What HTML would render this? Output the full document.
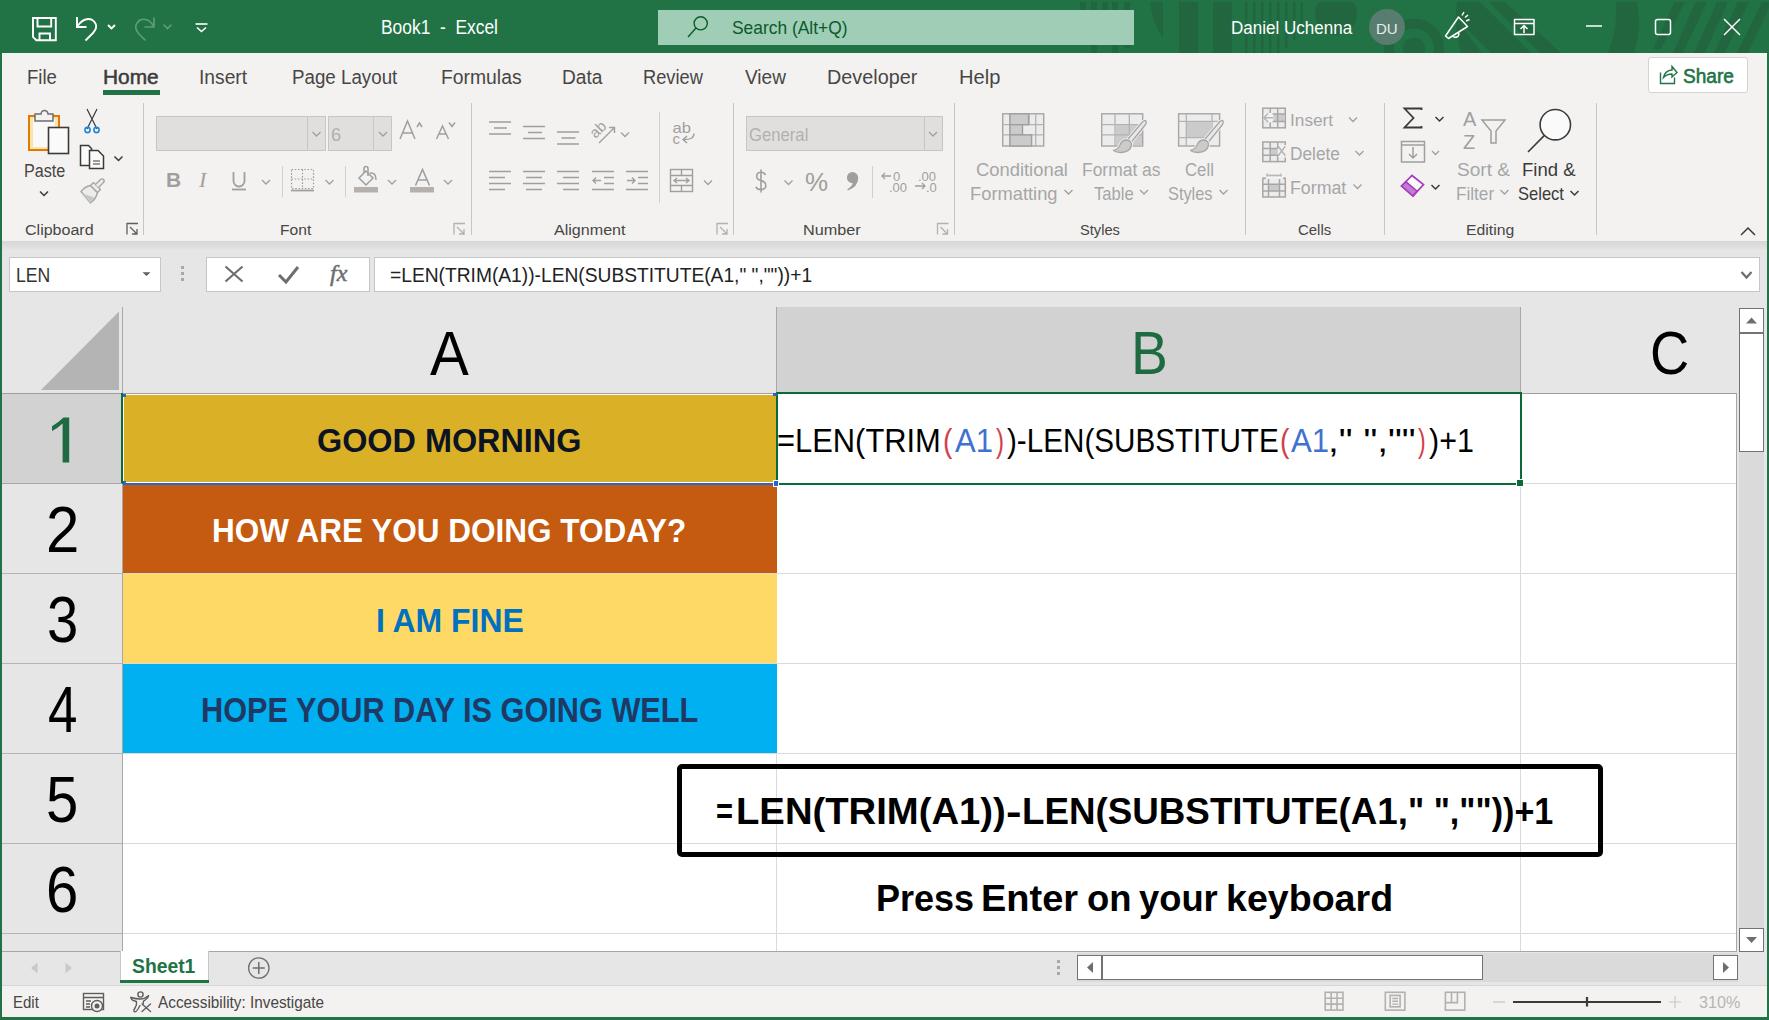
<!DOCTYPE html>
<html><head><meta charset="utf-8">
<style>
*{box-sizing:border-box}
html,body{margin:0;padding:0}
body{width:1769px;height:1020px;overflow:hidden;position:relative;background:#217346;font-family:"Liberation Sans",sans-serif}
.a{position:absolute}
.t{position:absolute;white-space:nowrap;transform-origin:0 0;font-family:"Liberation Sans",sans-serif}
svg{position:absolute;overflow:visible}
</style></head><body>
<!-- title bar -->
<div class="a" style="left:0;top:0;width:1769px;height:53px;background:#217346"></div>
<!-- decorative pattern -->
<svg style="left:0;top:0" width="1769" height="53" viewBox="0 0 1769 53">
  <defs><clipPath id="tbc"><rect x="0" y="2" width="1769" height="51"/></clipPath></defs>
  <g clip-path="url(#tbc)" fill="#22663f">
    <rect x="1080" y="2" width="6" height="8"/><rect x="1091" y="2" width="6" height="51"/><rect x="1102" y="2" width="6" height="8"/><rect x="1112" y="2" width="6" height="51"/><rect x="1124" y="2" width="6" height="46"/>
    <path d="M1150 2 L1163 2 L1163 38 Q1152 22 1150 2Z"/>
    <rect x="1179" y="2" width="19" height="51"/>
    <rect x="1213" y="2" width="19" height="51"/>
    <rect x="1245" y="2" width="2.5" height="51"/><rect x="1253" y="2" width="2.5" height="51"/><rect x="1261" y="2" width="2.5" height="51"/><rect x="1269" y="2" width="2.5" height="51"/><rect x="1277" y="2" width="2.5" height="51"/><rect x="1285" y="2" width="2.5" height="46"/><rect x="1293" y="2" width="2.5" height="38"/><rect x="1300.5" y="2" width="2.5" height="28"/>
    <circle cx="1336" cy="14" r="21"/>
    <path fill-rule="evenodd" d="M1384 48.5 A30 30 0 0 1 1444 48.5 A30 30 0 0 1 1384 48.5 Z M1394 48.5 A20 20 0 0 0 1434 48.5 A20 20 0 0 0 1394 48.5 Z"/>
    <circle cx="1414" cy="48.5" r="11"/>
    <path d="M1457 2 L1505 2 L1561 53 L1461 53 Q1453 28 1457 2 Z"/>
    <path d="M1616 2 L1637 2 Q1642 28 1634 53 L1608 53 Q1618 28 1616 2 Z"/>
    <path d="M1674.5 2 L1685 2 L1661 49 L1653 49 Z"/><path d="M1695.5 2 L1707 2 L1683 53 L1673 53 Z"/><path d="M1717 2 L1728 2 L1705 53 L1694 53 Z"/><path d="M1737.5 2 L1749 2 L1725 53 L1714 53 Z"/><path d="M1762 2 L1769 2 L1769 8 L1748 53 L1737 53 Z"/>
  </g>
  <g clip-path="url(#tbc)" fill="#217346">
    <path d="M1480 2 L1489 2 L1540 53 L1531 53 Z"/><path d="M1458 22 L1466 28 L1491 53 L1482 53 Z"/>
  </g>
</svg>
<!-- QAT icons -->
<svg style="left:0;top:0" width="260" height="53">
  <g fill="none" stroke="#fff" stroke-width="1.9">
    <path d="M33 18 H55.8 V40.2 H36.3 L33 36.8 Z"/><path d="M37.5 18 V26.5 H51.2 V18"/><path d="M39.5 40.2 V33.5 H50 V40.2"/>
  </g>
  <g fill="none" stroke="#fff" stroke-width="1.9" stroke-linecap="butt">
    <path d="M77 17 V27 H86.5"/><path d="M77.5 26 Q84 17 91.5 19.5 Q100 25 93 33 L85.5 40.5"/>
    <path d="M108 25 L111.5 28.5 L115 25"/>
    <path d="M203 19.5 H193" stroke="none"/>
  </g>
  <g fill="none" stroke="#5e9d78" stroke-width="1.6" stroke-linecap="round">
    <path d="M154 18 V27 H145"/><path d="M153.5 26 Q148 17 140 20 Q132 26 139 34 L145 40"/>
    <path d="M164 25 L167.5 28.5 L171 25"/>
  </g>
  <g fill="none" stroke="#fff" stroke-width="1.6">
    <path d="M195.5 24 H207.5"/><path d="M197 27.5 L201.5 31.5 L206 27.5"/>
  </g>
</svg>
<!-- search box -->
<div class="a" style="left:658px;top:10px;width:476px;height:35px;background:#a0cdb5"></div>
<svg style="left:0;top:0" width="760" height="53"><g fill="none" stroke="#0b5a2c" stroke-width="1.4"><circle cx="700.7" cy="23.3" r="6.6"/><path d="M696 28 L688 37"/></g></svg>
<!-- avatar & window controls -->
<div class="a" style="left:1369px;top:9px;width:36px;height:36px;border-radius:50%;background:#587c70"></div>
<div class="t" style="left:1376px;top:18.5px;font-size:15.5px;line-height:20px;color:#e4eee9;transform:scaleX(0.97)">DU</div>
<svg style="left:0;top:0" width="1769" height="53">
  <g fill="none" stroke="#fff" stroke-width="1.5" stroke-linejoin="round">
    <path d="M1445.5 36 L1448.5 38.5 L1467.5 26.5 L1458.5 17 Z"/><path d="M1452.5 35.5 A3.2 3.2 0 1 0 1458.5 32.5"/><path d="M1462 15.5 L1464 12 M1466 21 L1469.5 19.5 M1465 17.5 L1468 15"/>
    <rect x="1514.5" y="19.5" width="19.5" height="15"/><path d="M1514.5 23.5 H1534"/><path d="M1524 33 V25.5 M1520.5 29 L1524 25.5 L1527.5 29"/>
    <path d="M1586 26 H1602"/>
    <rect x="1655.5" y="19.5" width="15" height="15" rx="2"/>
    <path d="M1724 19 L1740 35 M1740 19 L1724 35"/>
  </g>
</svg>

<!-- ribbon -->
<div class="a" style="left:2px;top:53px;width:1765px;height:188px;background:#f3f2f1"></div>
<div class="a" style="left:103px;top:90px;width:57px;height:5px;background:#217346"></div>
<div class="a" style="left:1648px;top:57px;width:100px;height:36px;background:#fff;border:1px solid #d6d4d2;border-radius:3px"></div>
<svg style="left:0;top:0" width="1769" height="100"><g fill="none" stroke="#217346" stroke-width="1.4" stroke-linejoin="miter"><path d="M1660.5 72.5 V83.5 H1674.5 V77.5"/><path d="M1663.5 77.5 Q1665 70.5 1672 70 V66.5 L1677 72.5 L1672 77 V74 Q1667 74 1663.5 77.5 Z"/></g></svg>
<!-- group separators -->
<div class="a" style="left:143px;top:103px;width:1px;height:132px;background:#c8c6c4"></div>
<div class="a" style="left:471px;top:103px;width:1px;height:132px;background:#c8c6c4"></div>
<div class="a" style="left:733px;top:103px;width:1px;height:132px;background:#c8c6c4"></div>
<div class="a" style="left:954px;top:103px;width:1px;height:132px;background:#c8c6c4"></div>
<div class="a" style="left:1245px;top:103px;width:1px;height:132px;background:#c8c6c4"></div>
<div class="a" style="left:1384px;top:103px;width:1px;height:132px;background:#c8c6c4"></div>
<div class="a" style="left:1596px;top:103px;width:1px;height:132px;background:#c8c6c4"></div>
<div class="a" style="left:282px;top:166px;width:1px;height:31px;background:#d2d0ce"></div>
<div class="a" style="left:345px;top:166px;width:1px;height:31px;background:#d2d0ce"></div>
<div class="a" style="left:659px;top:112px;width:1px;height:91px;background:#d2d0ce"></div>
<div class="a" style="left:872px;top:166px;width:1px;height:32px;background:#d2d0ce"></div>
<!-- font boxes -->
<div class="a" style="left:156px;top:116px;width:170px;height:35px;background:#e1dfdd;border:1px solid #c8c6c4"></div>
<div class="a" style="left:307px;top:117px;width:1px;height:33px;background:#c8c6c4"></div>
<div class="a" style="left:328px;top:116px;width:64px;height:35px;background:#e1dfdd;border:1px solid #c8c6c4"></div>
<div class="a" style="left:373px;top:117px;width:1px;height:33px;background:#c8c6c4"></div>
<div class="a" style="left:746px;top:116px;width:197px;height:35px;background:#e1dfdd;border:1px solid #c8c6c4"></div>
<div class="a" style="left:924px;top:117px;width:1px;height:33px;background:#c8c6c4"></div>
<!-- RIBBON ICONS -->
<svg style="left:0;top:0" width="1769" height="245" id="ribicons">
  <!-- paste -->
  <rect x="29" y="116" width="30" height="34" fill="#fbe3b0" stroke="#e07b00" stroke-width="2"/>
  <rect x="33" y="119" width="22" height="28" fill="#f9f9f9"/>
  <path d="M35 121 V114 H41 A3.5 3.5 0 0 1 48 114 H53 V121 Z" fill="#f3f2f1" stroke="#6e6e6e" stroke-width="1.5"/>
  <rect x="48.5" y="127.5" width="20" height="26" fill="#fafafa" stroke="#3b3a39" stroke-width="1.6"/>
  <!-- chevrons (dark) -->
  <g fill="none" stroke="#3b3a39" stroke-width="1.5">
    <path d="M40 191.5 L44 195.5 L48 191.5"/>
    <path d="M114.5 156.5 L118.5 160.5 L122.5 156.5"/>
    <path d="M1435.5 117 L1439.5 121 L1443.5 117"/>
    <path d="M1431.5 185 L1435.5 189 L1439.5 185"/>
    <path d="M1570.5 191 L1574.5 195 L1578.5 191"/>
    <path d="M1741 235 L1748 228 L1755 235"/>
  </g>
  <!-- scissors -->
  <g fill="none" stroke="#3b3a39" stroke-width="1.2"><path d="M87 109 L97 129 M97 109 L87 129"/></g>
  <g fill="none" stroke="#1e8ad6" stroke-width="1.6"><circle cx="87.5" cy="130" r="2.6"/><circle cx="96.5" cy="130" r="2.6"/></g>
  <!-- copy -->
  <g fill="#fafafa" stroke="#3b3a39" stroke-width="1.5"><path d="M89.5 165.5 H80.5 V145.5 H88.5 L91.5 148.5 V150.5"/><path d="M89.5 168.5 V150.5 H98 L103.5 156 V168.5 Z"/></g>
  <g stroke="#3b3a39" stroke-width="1.2"><path d="M93 161 H100 M93 164 H100"/></g>
  <!-- format painter -->
  <g stroke="#a6a6a6" stroke-width="1.4" stroke-linejoin="round">
    <path d="M81 191.5 Q85 186.5 90.5 185.5 L97.5 192.5 Q96 199 90.5 203 Z" fill="#ececec"/>
    <path d="M82.5 193.5 L90.5 203 L94.5 197.5 Z" fill="#c8c8c8" stroke="none"/>
    <path d="M90.5 185.5 L93.5 182.5 L100.5 189.5 L97.5 192.5 Z" fill="#ececec"/>
    <path d="M95.5 184.5 L100.5 179.5 A2 2 0 0 1 103.5 182.5 L98.5 187.5" fill="#ececec"/>
  </g>
  <!-- launchers -->
  <g fill="none" stroke="#605e5c" stroke-width="1.3">
    <path d="M126.5 235 V224 H137.5 V235 Z" stroke="none"/>
    <path d="M127 234.5 V223.5 H138" /><path d="M130 227 L137 234 M137 229 V234 H132"/>
  </g>
  <g fill="none" stroke="#b3b0ad" stroke-width="1.3">
    <path d="M454 234.5 V223.5 H465"/><path d="M457 227 L464 234 M464 229 V234 H459"/>
    <path d="M717 234.5 V223.5 H728"/><path d="M720 227 L727 234 M727 229 V234 H722"/>
    <path d="M937.5 234.5 V223.5 H948.5"/><path d="M940.5 227 L947.5 234 M947.5 229 V234 H942.5"/>
  </g>
  <!-- disabled chevrons -->
  <g fill="none" stroke="#a19f9d" stroke-width="1.3">
    <path d="M312.5 132 L316.5 136 L320.5 132"/>
    <path d="M379 132 L383 136 L387 132"/>
    <path d="M934 132 L938 136 L942 132" transform="translate(-5 0)"/>
    <path d="M262 180 L266 184 L270 180"/>
    <path d="M325.5 180 L329.5 184 L333.5 180"/>
    <path d="M388 180 L392 184 L396 180"/>
    <path d="M444 180 L448 184 L452 180"/>
    <path d="M621 132.5 L625 136.5 L629 132.5"/>
    <path d="M704 180.5 L708 184.5 L712 180.5"/>
    <path d="M784.5 180.5 L788.5 184.5 L792.5 180.5"/>
    <path d="M1064.5 190 L1068.5 194 L1072.5 190"/>
    <path d="M1140 190 L1144 194 L1148 190"/>
    <path d="M1219.5 190 L1223.5 194 L1227.5 190"/>
    <path d="M1349 117.5 L1353 121.5 L1357 117.5"/>
    <path d="M1355.5 151 L1359.5 155 L1363.5 151"/>
    <path d="M1353.5 184.5 L1357.5 188.5 L1361.5 184.5"/>
    <path d="M1432 151 L1435.5 154.5 L1439 151"/>
    <path d="M1500.5 190 L1504.5 194 L1508.5 190"/>
  </g>
  <!-- grow/shrink font -->
  <g fill="none" stroke="#a19f9d" stroke-width="1.5">
    <path d="M400 139 L407.5 121 L415 139 M403 133 H412"/><path d="M417 127 L419.5 123 L422 127"/>
    <path d="M436.5 139 L442.5 126 L448.5 139 M439 134 H446"/><path d="M449 122.5 L452 126.5 L455 122.5"/>
  </g>
  <!-- B I U -->
  <text x="166" y="187" font-family="Liberation Sans" font-weight="700" font-size="21" fill="#a19f9d">B</text>
  <text x="199" y="187" font-family="Liberation Serif" font-style="italic" font-size="22" fill="#a19f9d">I</text>
  <g fill="none" stroke="#a19f9d" stroke-width="1.8"><path d="M233.5 172 V181 A5.5 5.5 0 0 0 244.5 181 V172"/><path d="M232 189.5 H246"/></g>
  <!-- borders -->
  <g fill="none" stroke="#a19f9d" stroke-width="1.2" stroke-dasharray="1.6 1.6"><rect x="291.5" y="169.5" width="22" height="19"/><path d="M302.5 169.5 V189 M291.5 179 H313.5"/></g>
  <path d="M291 190.5 H314" stroke="#a19f9d" stroke-width="1.8"/>
  <!-- fill color -->
  <g fill="none" stroke="#a19f9d" stroke-width="1.5"><path d="M359 178 L366 171 L373 178 L366 185 Z"/><path d="M364 173 V168.5 A2 2 0 0 1 368 168.5 V176"/><path d="M370 173 Q376 172 376 180"/></g>
  <rect x="354" y="187" width="24" height="5.5" fill="#b5b0ac"/>
  <!-- font color -->
  <g fill="none" stroke="#a19f9d" stroke-width="1.6"><path d="M415.5 185.5 L422.5 169.5 L429.5 185.5 M418 180 H427"/></g>
  <rect x="410" y="187" width="24" height="5.5" fill="#b5b0ac"/>
  <!-- alignment lines -->
  <g stroke="#a19f9d" stroke-width="1.6">
    <path d="M489 122 H511 M494 128 H507 M489 134 H511"/>
    <path d="M523 126.5 H545 M528 132.5 H542 M523 138.5 H545"/>
    <path d="M557 132 H579 M561.5 138 H575.5 M557 144 H579"/>
    <path d="M489 171.5 H511 M489 177.5 H505 M489 183.5 H511 M489 189.5 H505"/>
    <path d="M523 171.5 H545 M526 177.5 H542 M523 183.5 H545 M526 189.5 H542"/>
    <path d="M557 171.5 H579 M563 177.5 H579 M557 183.5 H579 M563 189.5 H579"/>
    <path d="M592 171.5 H614 M604 177.5 H614 M604 183.5 H614 M592 189.5 H614"/>
    <path d="M626 171.5 H648 M638 177.5 H648 M638 183.5 H648 M626 189.5 H648"/>
  </g>
  <g fill="none" stroke="#a19f9d" stroke-width="1.4">
    <path d="M601 180.5 H593 M596 177.5 L593 180.5 L596 183.5"/>
    <path d="M627 180.5 H635 M632 177.5 L635 180.5 L632 183.5"/>
    <path d="M599 143 L614.5 127.5 M609 127.5 H614.5 V133"/>
    <rect x="670.5" y="169.5" width="22" height="22"/><path d="M670.5 175.5 H692.5 M670.5 185.5 H692.5 M681.5 169.5 V175.5 M681.5 185.5 V191.5"/>
    <path d="M674 180.5 H689 M677 178 L674 180.5 L677 183 M686 178 L689 180.5 L686 183"/>
    <path d="M683 139.5 Q694 140 694 133.5 M687 136 L683 139.5 L687 143"/>
  </g>
  <text x="0" y="0" font-family="Liberation Sans" font-size="15" fill="#a19f9d" transform="translate(595.5 139) rotate(-45)">ab</text>
  <text x="672.5" y="133" font-family="Liberation Sans" font-size="15" fill="#a19f9d" textLength="18.5" lengthAdjust="spacingAndGlyphs">ab</text>
  <text x="672.5" y="144" font-family="Liberation Sans" font-size="15" fill="#a19f9d">c</text>
  <!-- number -->
  <path d="M761 169.5 V192.5 M765.5 175 Q764.5 172.3 761 172.3 Q756.7 172.3 756.7 176.3 Q756.7 179.6 761 180.6 Q765.8 181.7 765.8 185.6 Q765.8 189.6 761 189.6 Q757.3 189.6 755.8 186.8" fill="none" stroke="#a19f9d" stroke-width="1.6"/>
  <text x="805" y="191" font-family="Liberation Sans" font-size="26" fill="#a19f9d">%</text>
  <path d="M852.3 172 A5.8 5.8 0 0 1 858.2 178.5 Q858 186.5 848 190.6 L847.3 189.2 Q852 186.5 852.8 183.3 A5.6 5.6 0 0 1 852.3 172 Z" fill="#a19f9d"/>
  <text x="893" y="181" font-family="Liberation Sans" font-size="13" fill="#a19f9d">0</text>
  <text x="889" y="192" font-family="Liberation Sans" font-size="13" fill="#a19f9d">.00</text>
  <path d="M891 176 H882 M885 173 L882 176 L885 179" fill="none" stroke="#a19f9d" stroke-width="1.3"/>
  <text x="918" y="181" font-family="Liberation Sans" font-size="13" fill="#a19f9d">.00</text>
  <text x="926" y="192" font-family="Liberation Sans" font-size="13" fill="#a19f9d">.0</text>
  <path d="M915 186 H925 M922 183 L925 186 L922 189" fill="none" stroke="#a19f9d" stroke-width="1.3"/>
  <!-- styles icons -->
  <g fill="#ececec" stroke="#a6a6a6" stroke-width="1.4">
    <rect x="1002.7" y="113.8" width="41" height="32.2"/>
    <rect x="1101.7" y="113.8" width="41" height="32.2"/>
    <rect x="1178.6" y="113.8" width="41" height="32.2"/>
  </g>
  <g fill="none" stroke="#b3b3b3" stroke-width="1.3">
    <path d="M1010 113.8 V146 M1035.7 113.8 V146 M1002.7 124.7 H1043.7 M1002.7 134.9 H1043.7 M1029 113.8 V124.7"/>
    <path d="M1115 113.8 V146 M1129.3 113.8 V146 M1101.7 124.7 H1142.7 M1101.7 134.9 H1142.7"/>
    <path d="M1186.3 113.8 V146 M1212 113.8 V137.6 M1178.6 121.3 H1219.6 M1178.6 137.6 H1212"/>
  </g>
  <g fill="#cbcbcb" stroke="#9e9e9e" stroke-width="1.4">
    <rect x="1010" y="113.8" width="18.6" height="10.9"/>
    <rect x="1010" y="124.7" width="12.5" height="10.2"/>
    <rect x="1010" y="134.9" width="21.6" height="11.1"/>
  </g>
  <rect x="1115.7" y="125.4" width="26.3" height="20" fill="#cbcbcb"/>
  <path d="M1115 124.7 H1142.7 M1115 134.9 H1142.7 M1129.3 124.7 V146" stroke="#b3b3b3" stroke-width="1.3"/>
  <rect x="1187" y="122" width="25" height="15" fill="#cbcbcb"/>
  <g stroke="#a6a6a6" stroke-width="1.3" stroke-linejoin="round">
    <path d="M1128 139 L1142 122.5 Q1145 119.5 1146 121 Q1147 123 1144 126.5 L1131.5 142 Z" fill="#e8e8e8" stroke="#f3f2f1" stroke-width="3"/>
    <path d="M1128 139 L1142 122.5 Q1145 119.5 1146 121 Q1147 123 1144 126.5 L1131.5 142 Z" fill="#e8e8e8"/>
    <path d="M1126.5 140 Q1132 140.5 1131.5 145.5 Q1130 152 1121 152.5 Q1116 152.5 1113.5 150.5 Q1118 149.5 1120 145 Q1122 140 1126.5 140 Z" fill="#cbcbcb" stroke="#f3f2f1" stroke-width="3"/>
    <path d="M1126.5 140 Q1132 140.5 1131.5 145.5 Q1130 152 1121 152.5 Q1116 152.5 1113.5 150.5 Q1118 149.5 1120 145 Q1122 140 1126.5 140 Z" fill="#cbcbcb"/>
  </g>
  <g stroke="#a6a6a6" stroke-width="1.3" stroke-linejoin="round" transform="translate(77 0)">
    <path d="M1128 139 L1142 122.5 Q1145 119.5 1146 121 Q1147 123 1144 126.5 L1131.5 142 Z" fill="#e8e8e8" stroke="#f3f2f1" stroke-width="3"/>
    <path d="M1128 139 L1142 122.5 Q1145 119.5 1146 121 Q1147 123 1144 126.5 L1131.5 142 Z" fill="#e8e8e8"/>
    <path d="M1126.5 140 Q1132 140.5 1131.5 145.5 Q1130 152 1121 152.5 Q1116 152.5 1113.5 150.5 Q1118 149.5 1120 145 Q1122 140 1126.5 140 Z" fill="#cbcbcb" stroke="#f3f2f1" stroke-width="3"/>
    <path d="M1126.5 140 Q1132 140.5 1131.5 145.5 Q1130 152 1121 152.5 Q1116 152.5 1113.5 150.5 Q1118 149.5 1120 145 Q1122 140 1126.5 140 Z" fill="#cbcbcb"/>
  </g>
  <!-- cells icons -->
  <g fill="#ececec" stroke="#a6a6a6" stroke-width="1.5">
    <rect x="1262.8" y="108.2" width="22.5" height="19.6"/>
    <rect x="1262.8" y="142" width="22.5" height="19.6"/>
    <rect x="1262.8" y="178.2" width="22.5" height="18.8"/>
  </g>
  <rect x="1273.5" y="114" width="11.5" height="7.6" fill="#cbcbcb"/>
  <rect x="1270.2" y="148.5" width="7.5" height="6.8" fill="#cbcbcb"/>
  <rect x="1268.5" y="184.2" width="11" height="6.8" fill="#cbcbcb"/>
  <g fill="none" stroke="#a6a6a6" stroke-width="1.5">
    <path d="M1270.2 108.2 V127.8 M1277.7 108.2 V127.8 M1262.8 114 H1285.3 M1262.8 121.6 H1285.3"/>
    <path d="M1270.2 142 V161.6 M1277.7 142 V148.5 M1277.7 155.3 V161.6 M1262.8 148.5 H1277.7 M1262.8 155.3 H1277.7"/>
    <path d="M1268.5 178.2 V197 M1279.5 178.2 V197 M1262.8 184.2 H1285.3 M1262.8 191 H1285.3"/>
  </g>
  <rect x="1263.6" y="113" width="9" height="9.5" fill="#f3f2f1"/>
  <path d="M1273 117.7 H1264 M1268 113.5 L1263.8 117.7 L1268 121.9" fill="none" stroke="#b8b8b8" stroke-width="1.6"/>
  <rect x="1278.5" y="145" width="8" height="12.5" fill="#f3f2f1"/>
  <path d="M1278.2 146.3 L1285.3 155.8 M1285.3 146.3 L1278.2 155.8" fill="none" stroke="#b3b3b3" stroke-width="1.5"/>
  <path d="M1267 175.5 H1281 M1267 173.5 V178.5 M1281 173.5 V178.5" fill="none" stroke="#b8b8b8" stroke-width="1.4"/>
  <rect x="1266" y="176.5" width="17" height="2.5" fill="#f3f2f1"/>
  <path d="M1267 175.5 H1281" stroke="#b8b8b8" stroke-width="1.4"/>
  <!-- editing icons -->
  <path d="M1421.5 110 V108.5 H1404.5 L1413.5 118 L1404.5 127.5 H1421.5 V126" fill="none" stroke="#3b3a39" stroke-width="1.8"/>
  <g fill="none" stroke="#a19f9d" stroke-width="1.5"><rect x="1401.5" y="141.5" width="23" height="20.5"/><path d="M1401.5 145 H1424.5"/><path d="M1413 147 V158 M1409 154 L1413 158 L1417 154"/></g>
  <path d="M1401.5 186 L1412 175.5 L1423.5 184.5 L1413 196 Z" fill="#fbfbfb" stroke="#a33dbb" stroke-width="1.7"/>
  <path d="M1401.5 186 L1406 181.8 L1417 191 L1413 196 Z" fill="#c27ad6" stroke="#a33dbb" stroke-width="1.5"/>
  <text x="1463" y="126" font-family="Liberation Sans" font-size="20" fill="#a19f9d">A</text>
  <text x="1463" y="149" font-family="Liberation Sans" font-size="20" fill="#a19f9d">Z</text>
  <path d="M1482 120 H1505 L1496 131 V143 H1491 V131 Z" fill="none" stroke="#a19f9d" stroke-width="1.5"/>
  <g fill="none" stroke="#3b3a39" stroke-width="1.6"><circle cx="1555.3" cy="124.7" r="15.2" fill="#fafafa"/><path d="M1544.2 135.6 L1528 152"/></g>
</svg>
<!-- ribbon shadow -->
<div class="a" style="left:2px;top:241px;width:1765px;height:10px;background:linear-gradient(#d6d6d6,#e6e6e6)"></div>
<!-- formula bar area -->
<div class="a" style="left:2px;top:250px;width:1765px;height:57px;background:#e6e6e6"></div>
<div class="a" style="left:9px;top:257px;width:152px;height:35px;background:#fff;border:1px solid #c6c6c6"></div>
<svg style="left:0;top:240px" width="1769" height="70">
  <path d="M142.5 32.3 H150.5 L146.5 36 Z" fill="#605e5c"/>
  <g fill="#a8a8a8"><rect x="181" y="26" width="3" height="3"/><rect x="181" y="32" width="3" height="3"/><rect x="181" y="38" width="3" height="3"/></g>
</svg>
<div class="a" style="left:206px;top:257px;width:164px;height:35px;background:#fff;border:1px solid #c6c6c6"></div>
<div class="a" style="left:374px;top:257px;width:1386px;height:35px;background:#fff;border:1px solid #c6c6c6"></div>
<svg style="left:0;top:240px" width="1769" height="70">
  <g fill="none" stroke="#6e6e6e" stroke-width="2.2"><path d="M225.5 26.5 L242.5 41.5 M242.5 26.5 L225.5 41.5"/></g>
  <path d="M279 35 L286 42 L298 27" fill="none" stroke="#6e6e6e" stroke-width="3"/>
  <text x="330" y="41" font-family="Liberation Serif" font-style="italic" font-size="24" fill="#6e6e6e" stroke="#6e6e6e" stroke-width="0.5">fx</text>
  <path d="M1741.5 32 L1746.5 37.5 L1751.5 32" fill="none" stroke="#6e6e6e" stroke-width="2.2"/>
</svg>

<!-- GRID -->
<div class="a" style="left:2px;top:307px;width:1735px;height:644px;background:#fff"></div>
<!-- column header -->
<div class="a" style="left:2px;top:307px;width:1735px;height:86px;background:#e6e6e6"></div>
<div class="a" style="left:776px;top:307px;width:744px;height:86px;background:#d2d2d2"></div>
<svg style="left:0;top:0" width="1769" height="1020">
  <path d="M41 390 L119 311.5 V390 Z" fill="#b4b4b4"/>
</svg>
<div class="a" style="left:2px;top:393px;width:1735px;height:1px;background:#9e9e9e"></div>
<div class="a" style="left:122px;top:307px;width:1px;height:86px;background:#a8a8a8"></div>
<div class="a" style="left:776px;top:307px;width:1px;height:86px;background:#a8a8a8"></div>
<div class="a" style="left:1520px;top:307px;width:1px;height:86px;background:#a8a8a8"></div>
<div class="a" style="left:776px;top:392px;width:746px;height:2px;background:#0b6b37"></div>
<!-- row header -->
<div class="a" style="left:2px;top:394px;width:120px;height:557px;background:#e6e6e6"></div>
<div class="a" style="left:2px;top:394px;width:120px;height:89px;background:#d2d2d2"></div>
<div class="a" style="left:122px;top:394px;width:1px;height:557px;background:#a8a8a8"></div>
<div class="a" style="left:121px;top:393px;width:2px;height:91px;background:#0b6b37"></div>
<div class="a" style="left:2px;top:483px;width:120px;height:1px;background:#a8a8a8"></div>
<div class="a" style="left:2px;top:573px;width:120px;height:1px;background:#b4b4b4"></div>
<div class="a" style="left:2px;top:663px;width:120px;height:1px;background:#b4b4b4"></div>
<div class="a" style="left:2px;top:753px;width:120px;height:1px;background:#b4b4b4"></div>
<div class="a" style="left:2px;top:843px;width:120px;height:1px;background:#b4b4b4"></div>
<div class="a" style="left:2px;top:933px;width:120px;height:1px;background:#b4b4b4"></div>
<!-- gridlines -->
<div class="a" style="left:123px;top:573px;width:1614px;height:1px;background:#dadada"></div>
<div class="a" style="left:123px;top:663px;width:1614px;height:1px;background:#dadada"></div>
<div class="a" style="left:123px;top:753px;width:1614px;height:1px;background:#dadada"></div>
<div class="a" style="left:123px;top:843px;width:1614px;height:1px;background:#dadada"></div>
<div class="a" style="left:123px;top:933px;width:1614px;height:1px;background:#dadada"></div>
<div class="a" style="left:1521px;top:483px;width:216px;height:1px;background:#dadada"></div>
<div class="a" style="left:776px;top:485px;width:1px;height:466px;background:#dadada"></div>
<div class="a" style="left:1520px;top:485px;width:1px;height:466px;background:#dadada"></div>
<div class="a" style="left:1736px;top:393px;width:1px;height:558px;background:#a8a8a8"></div>
<!-- cell fills -->
<div class="a" style="left:123px;top:394px;width:653px;height:91px;background:#fff"></div>
<div class="a" style="left:124px;top:395px;width:652px;height:87px;background:#dab026"></div>
<div class="a" style="left:123px;top:483px;width:653px;height:2px;background:#2a66c9"></div>
<div class="a" style="left:123px;top:394px;width:3px;height:3px;background:#2a66c9"></div>
<div class="a" style="left:123px;top:481px;width:3px;height:5px;background:#2a66c9"></div>
<div class="a" style="left:123px;top:485px;width:654px;height:88px;background:#c55a11"></div>
<div class="a" style="left:123px;top:574px;width:654px;height:89px;background:#ffd966"></div>
<div class="a" style="left:123px;top:664px;width:654px;height:89px;background:#00b0f0"></div>
<!-- B1 selection -->
<div class="a" style="left:776px;top:392px;width:746px;height:93px;border:2px solid #0b6b37;background:transparent"></div>
<div class="a" style="left:776px;top:392px;width:2px;height:93px;background:#0b6b37"></div>
<div class="a" style="left:1517px;top:480px;width:6px;height:6px;background:#0b6b37;outline:1px solid #fff"></div>
<div class="a" style="left:773px;top:393px;width:4px;height:3px;background:#2a66c9"></div>
<div class="a" style="left:773px;top:480px;width:6px;height:7px;background:#fff"></div>
<div class="a" style="left:774px;top:481px;width:4px;height:5px;background:#2a66c9"></div>
<!-- annotation box -->
<div class="a" style="left:677px;top:764px;width:926px;height:93px;border:5px solid #000;border-radius:5px"></div>
<!-- vertical scrollbar -->
<div class="a" style="left:1737px;top:307px;width:30px;height:644px;background:#e6e6e6"></div>
<div class="a" style="left:1739px;top:452px;width:25px;height:476px;background:#dadada"></div>
<div class="a" style="left:1739px;top:308px;width:25px;height:25px;background:#fff;border:1px solid #737373"></div>
<div class="a" style="left:1739px;top:333px;width:25px;height:119px;background:#fff;border:1px solid #737373;border-top-width:1px"></div>
<svg style="left:0;top:0" width="1769" height="1020"><path d="M1746 323.5 H1757 L1751.5 317.5 Z" fill="#6e6e6e"/><path d="M1746 937 H1757 L1751.5 943 Z" fill="#6e6e6e"/></svg>
<!-- sheet tab bar -->
<div class="a" style="left:2px;top:951px;width:1765px;height:34px;background:#e6e6e6"></div>
<div class="a" style="left:2px;top:951px;width:1735px;height:1px;background:#a6a6a6"></div>
<div class="a" style="left:1077px;top:953px;width:661px;height:29px;background:#dadada"></div>
<div class="a" style="left:120px;top:951px;width:89px;height:32px;background:#fff;border-left:1px solid #c6c6c6;border-right:1px solid #c6c6c6"></div>
<div class="a" style="left:120px;top:980px;width:89px;height:2.5px;background:#217346"></div>
<svg style="left:0;top:0" width="1769" height="1020">
  <path d="M37.5 962.5 V973.5 L31 968 Z" fill="#c8c8c8"/><path d="M65.5 962.5 V973.5 L72 968 Z" fill="#c8c8c8"/>
  <circle cx="258.8" cy="968" r="10.2" fill="none" stroke="#6e6e6e" stroke-width="1.3"/><path d="M258.8 962 V974 M252.8 968 H264.8" stroke="#6e6e6e" stroke-width="1.5"/>
  <g fill="#a8a8a8"><rect x="1057" y="960" width="3" height="3"/><rect x="1057" y="966" width="3" height="3"/><rect x="1057" y="972" width="3" height="3"/></g>
</svg>
<!-- h scrollbar -->
<div class="a" style="left:1739px;top:928px;width:25px;height:24px;background:#fff;border:1px solid #737373"></div>
<svg style="left:0;top:0" width="1769" height="1020"><path d="M1746 937 H1757 L1751.5 943 Z" fill="#6e6e6e"/></svg>
<div class="a" style="left:1077px;top:955px;width:26px;height:25px;background:#fff;border:1px solid #737373"></div>
<div class="a" style="left:1101px;top:955px;width:382px;height:25px;background:#fff;border:1px solid #737373;border-left-width:2px"></div>
<div class="a" style="left:1713px;top:955px;width:25px;height:25px;background:#fff;border:1px solid #737373"></div>
<svg style="left:0;top:0" width="1769" height="1020"><path d="M1093 962 V973 L1087 967.5 Z" fill="#6e6e6e"/><path d="M1723 962 V973 L1729 967.5 Z" fill="#6e6e6e"/></svg>
<!-- status bar -->
<div class="a" style="left:2px;top:985px;width:1765px;height:32px;background:#f3f2f1;border-top:1px solid #d6d6d6"></div>
<svg style="left:0;top:0" width="1769" height="1020">
  <g fill="none" stroke="#605e5c" stroke-width="1.4">
    <rect x="83.5" y="993.5" width="20" height="16"/><path d="M83.5 997.5 H103.5 M86 1001 H91 M86 1004 H90 M86 1007 H90"/>
    <circle cx="97" cy="1006" r="5.5" fill="#f3f2f1"/>
  </g>
  <circle cx="97" cy="1006" r="2.5" fill="#605e5c"/>
  <g fill="none" stroke="#605e5c" stroke-width="1.4" stroke-linecap="round">
    <circle cx="140.5" cy="994.5" r="2.6"/><path d="M130.8 997.5 Q131 999.5 133.5 1000.5 L136.5 1001.5 Q137 1005 135 1008 Q133 1011 134.5 1011.8 Q136 1012.3 138 1009 L140 1005.5"/><path d="M148.5 995.8 Q148 998 145.5 999.8 L143.5 1001.2 Q143 1002.5 143.2 1004"/><path d="M131 997.5 Q136 999 140.5 999 Q145 999 148.5 995.8"/><path d="M142 1004 L150.5 1011.5 M150.5 1004 L142 1011.5"/>
  </g>
  <g fill="none" stroke="#a19f9d" stroke-width="1.3">
    <rect x="1325.2" y="992.3" width="17.8" height="17.8" stroke="#b3b0ad" stroke-width="1.6"/><path d="M1331.2 992.3 V1010 M1337.1 992.3 V1010 M1325.2 998.2 H1343 M1325.2 1004.1 H1343" stroke="#b3b0ad" stroke-width="1.6"/>
    <rect x="1385.3" y="992.3" width="19.6" height="17.8" stroke="#b3b0ad" stroke-width="1.6"/><rect x="1390.1" y="995.4" width="10" height="11.4" stroke="#b3b0ad" stroke-width="1.6"/><path d="M1392.3 998.5 H1398 M1392.3 1001.3 H1398 M1392.3 1004.1 H1398" stroke="#b3b0ad" stroke-width="1.4"/>
    <rect x="1445.4" y="992.3" width="19.4" height="17.8" stroke="#b3b0ad" stroke-width="1.6"/><path d="M1451.5 992.3 V1002.6 M1457.4 992.3 V1002.6 H1445.4" stroke="#b3b0ad" stroke-width="1.6"/>
    <path d="M1493 1002 H1505" stroke="#c8c6c4"/><path d="M1669 1002 H1681 M1675 996 V1008" stroke="#c8c6c4" stroke-width="1.1"/>
  </g>
  <path d="M1513 1002 H1661" stroke="#3b3a39" stroke-width="2.2"/>
  <path d="M1587 997 V1006.5" stroke="#3b3a39" stroke-width="2.2"/>
</svg>
<svg style="left:0;top:0" width="200" height="500"><path d="M62.6 462.5 V423.5 Q58 428 52 431 V426.2 Q59 422 63.5 417.5 H69.2 V462.5 Z" fill="#1e6b41"/></svg>
<div class="t" style="left:380.71px;top:18.00px;font-size:19.57px;line-height:19.57px;font-weight:400;color:#ffffff;transform:scaleX(0.8891);">Book1&nbsp;&nbsp;-&nbsp;&nbsp;Excel</div>
<div class="t" style="left:732.06px;top:19.00px;font-size:18.55px;line-height:18.55px;font-weight:400;color:#0b5a2c;transform:scaleX(0.9388);">Search (Alt+Q)</div>
<div class="t" style="left:1230.86px;top:19.00px;font-size:18.12px;line-height:18.12px;font-weight:400;color:#ffffff;transform:scaleX(0.9398);">Daniel Uchenna</div>
<div class="t" style="left:27.10px;top:67.00px;font-size:20.58px;line-height:20.58px;font-weight:400;color:#484644;transform:scaleX(0.9000);">File</div>
<div class="t" style="left:198.93px;top:67.00px;font-size:20.58px;line-height:20.58px;font-weight:400;color:#484644;transform:scaleX(0.9340);">Insert</div>
<div class="t" style="left:291.59px;top:67.00px;font-size:20.58px;line-height:20.58px;font-weight:400;color:#484644;transform:scaleX(0.9113);">Page Layout</div>
<div class="t" style="left:440.96px;top:67.00px;font-size:20.58px;line-height:20.58px;font-weight:400;color:#484644;transform:scaleX(0.9393);">Formulas</div>
<div class="t" style="left:561.77px;top:67.00px;font-size:20.58px;line-height:20.58px;font-weight:400;color:#484644;transform:scaleX(0.9302);">Data</div>
<div class="t" style="left:642.51px;top:67.00px;font-size:20.58px;line-height:20.58px;font-weight:400;color:#484644;transform:scaleX(0.8866);">Review</div>
<div class="t" style="left:745.20px;top:67.00px;font-size:20.58px;line-height:20.58px;font-weight:400;color:#484644;transform:scaleX(0.9250);">View</div>
<div class="t" style="left:827.34px;top:67.00px;font-size:20.58px;line-height:20.58px;font-weight:400;color:#484644;transform:scaleX(0.9624);">Developer</div>
<div class="t" style="left:959.22px;top:67.00px;font-size:20.58px;line-height:20.58px;font-weight:400;color:#484644;transform:scaleX(0.9780);">Help</div>
<div class="t" style="left:102.69px;top:67.00px;font-size:20.58px;line-height:20.58px;font-weight:400;color:#3b3a39;transform:scaleX(1.0148);-webkit-text-stroke:0.5px #3b3a39">Home</div>
<div class="t" style="left:1683.07px;top:66.00px;font-size:20.58px;line-height:20.58px;font-weight:400;color:#217346;transform:scaleX(0.9259);-webkit-text-stroke:0.6px #217346">Share</div>
<div class="t" style="left:25.47px;top:222.00px;font-size:15.51px;line-height:15.51px;font-weight:400;color:#484644;transform:scaleX(1.0338);">Clipboard</div>
<div class="t" style="left:279.79px;top:222.00px;font-size:15.51px;line-height:15.51px;font-weight:400;color:#484644;transform:scaleX(1.0067);">Font</div>
<div class="t" style="left:554.40px;top:222.00px;font-size:15.51px;line-height:15.51px;font-weight:400;color:#484644;transform:scaleX(1.0377);">Alignment</div>
<div class="t" style="left:802.55px;top:222.00px;font-size:15.51px;line-height:15.51px;font-weight:400;color:#484644;transform:scaleX(1.0481);">Number</div>
<div class="t" style="left:1079.56px;top:222.00px;font-size:15.51px;line-height:15.51px;font-weight:400;color:#484644;transform:scaleX(0.9439);">Styles</div>
<div class="t" style="left:1297.64px;top:222.00px;font-size:15.51px;line-height:15.51px;font-weight:400;color:#484644;transform:scaleX(0.9636);">Cells</div>
<div class="t" style="left:1465.88px;top:222.00px;font-size:15.51px;line-height:15.51px;font-weight:400;color:#484644;transform:scaleX(1.0174);">Editing</div>
<div class="t" style="left:24.15px;top:161.00px;font-size:18.99px;line-height:18.99px;font-weight:400;color:#484644;transform:scaleX(0.8511);">Paste</div>
<div class="t" style="left:330.61px;top:126.00px;font-size:18.41px;line-height:18.41px;font-weight:400;color:#b5aea8;transform:scaleX(0.9889);">6</div>
<div class="t" style="left:748.50px;top:126.00px;font-size:18.55px;line-height:18.55px;font-weight:400;color:#b5b0ac;transform:scaleX(0.9000);">General</div>
<div class="t" style="left:976.24px;top:160.00px;font-size:19.13px;line-height:19.13px;font-weight:400;color:#a6a6a6;transform:scaleX(0.9617);">Conditional</div>
<div class="t" style="left:969.91px;top:185.00px;font-size:18.55px;line-height:18.55px;font-weight:400;color:#a6a6a6;transform:scaleX(0.9885);">Formatting</div>
<div class="t" style="left:1081.89px;top:160.00px;font-size:19.13px;line-height:19.13px;font-weight:400;color:#a6a6a6;transform:scaleX(0.9129);">Format as</div>
<div class="t" style="left:1093.80px;top:185.00px;font-size:18.55px;line-height:18.55px;font-weight:400;color:#a6a6a6;transform:scaleX(0.8955);">Table</div>
<div class="t" style="left:1184.52px;top:160.00px;font-size:19.13px;line-height:19.13px;font-weight:400;color:#a6a6a6;transform:scaleX(0.8774);">Cell</div>
<div class="t" style="left:1167.92px;top:185.00px;font-size:18.55px;line-height:18.55px;font-weight:400;color:#a6a6a6;transform:scaleX(0.8816);">Styles</div>
<div class="t" style="left:1290.01px;top:112.00px;font-size:17.39px;line-height:17.39px;font-weight:400;color:#a6a6a6;transform:scaleX(0.9930);">Insert</div>
<div class="t" style="left:1290.06px;top:145.00px;font-size:18.41px;line-height:18.41px;font-weight:400;color:#a6a6a6;transform:scaleX(0.9385);">Delete</div>
<div class="t" style="left:1290.03px;top:179.00px;font-size:18.41px;line-height:18.41px;font-weight:400;color:#a6a6a6;transform:scaleX(0.9655);">Format</div>
<div class="t" style="left:1456.96px;top:161.00px;font-size:18.41px;line-height:18.41px;font-weight:400;color:#a6a6a6;transform:scaleX(1.0360);">Sort &amp;</div>
<div class="t" style="left:1455.60px;top:184.00px;font-size:19.13px;line-height:19.13px;font-weight:400;color:#a6a6a6;transform:scaleX(0.8976);">Filter</div>
<div class="t" style="left:1522.39px;top:161.00px;font-size:18.41px;line-height:18.41px;font-weight:400;color:#3b3a39;transform:scaleX(1.0058);">Find &amp;</div>
<div class="t" style="left:1517.73px;top:184.00px;font-size:19.13px;line-height:19.13px;font-weight:400;color:#3b3a39;transform:scaleX(0.8654);">Select</div>
<div class="t" style="left:15.72px;top:265.00px;font-size:20.00px;line-height:20.00px;font-weight:400;color:#333333;transform:scaleX(0.8811);">LEN</div>
<div class="t" style="left:389.77px;top:265.00px;font-size:20.72px;line-height:20.72px;font-weight:400;color:#222222;transform:scaleX(0.9269);">=LEN(TRIM(A1))-LEN(SUBSTITUTE(A1," ",""))+1</div>
<div class="t" style="left:430.40px;top:323.00px;font-size:62.32px;line-height:62.32px;font-weight:400;color:#000000;transform:scaleX(0.9333);">A</div>
<div class="t" style="left:1131.33px;top:322.00px;font-size:61.88px;line-height:61.88px;font-weight:400;color:#1e6b41;transform:scaleX(0.8939);">B</div>
<div class="t" style="left:1649.95px;top:322.00px;font-size:61.59px;line-height:61.59px;font-weight:400;color:#000000;transform:scaleX(0.8821);">C</div>
<div class="t" style="left:45.94px;top:497.00px;font-size:65.22px;line-height:65.22px;font-weight:400;color:#000000;transform:scaleX(0.9200);">2</div>
<div class="t" style="left:46.98px;top:587.00px;font-size:65.22px;line-height:65.22px;font-weight:400;color:#000000;transform:scaleX(0.8625);">3</div>
<div class="t" style="left:47.89px;top:677.00px;font-size:65.22px;line-height:65.22px;font-weight:400;color:#000000;transform:scaleX(0.8118);">4</div>
<div class="t" style="left:46.03px;top:767.00px;font-size:65.22px;line-height:65.22px;font-weight:400;color:#000000;transform:scaleX(0.8903);">5</div>
<div class="t" style="left:46.03px;top:857.00px;font-size:65.22px;line-height:65.22px;font-weight:400;color:#000000;transform:scaleX(0.8903);">6</div>
<div class="t" style="left:317.33px;top:424.00px;font-size:33.48px;line-height:33.48px;font-weight:700;color:#0c1424;transform:scaleX(0.9675);">GOOD MORNING</div>
<div class="t" style="left:212.22px;top:514.00px;font-size:33.48px;line-height:33.48px;font-weight:700;color:#ffffff;transform:scaleX(0.9412);">HOW ARE YOU DOING TODAY?</div>
<div class="t" style="left:375.87px;top:604.00px;font-size:33.04px;line-height:33.04px;font-weight:700;color:#0070c0;transform:scaleX(0.9667);">I AM FINE</div>
<div class="t" style="left:200.54px;top:693.00px;font-size:34.93px;line-height:34.93px;font-weight:700;color:#203864;transform:scaleX(0.8787);">HOPE YOUR DAY IS GOING WELL</div>
<div class="t" style="left:777.19px;top:424.00px;font-size:33.91px;line-height:33.91px;font-weight:400;color:#000;transform:scaleX(0.9107);">=LEN(TRIM</div>
<div class="t" style="left:943.03px;top:424.00px;font-size:33.91px;line-height:33.91px;font-weight:400;color:#d2414b;transform:scaleX(0.8333);">(</div>
<div class="t" style="left:955.40px;top:424.00px;font-size:33.91px;line-height:33.91px;font-weight:400;color:#3f72d0;transform:scaleX(0.9150);">A1</div>
<div class="t" style="left:996.30px;top:424.00px;font-size:33.91px;line-height:33.91px;font-weight:400;color:#d2414b;transform:scaleX(0.7100);">)</div>
<div class="t" style="left:1007.00px;top:424.00px;font-size:33.91px;line-height:33.91px;font-weight:400;color:#000;transform:scaleX(0.8742);">)-LEN(SUBSTITUTE</div>
<div class="t" style="left:1279.83px;top:424.00px;font-size:33.91px;line-height:33.91px;font-weight:400;color:#d2414b;transform:scaleX(0.8333);">(</div>
<div class="t" style="left:1291.20px;top:424.00px;font-size:33.91px;line-height:33.91px;font-weight:400;color:#3f72d0;transform:scaleX(0.9200);">A1</div>
<div class="t" style="left:1327.56px;top:424.00px;font-size:33.91px;line-height:33.91px;font-weight:400;color:#000;transform:scaleX(1.1472);">,"&nbsp;",""</div>
<div class="t" style="left:1418.00px;top:424.00px;font-size:33.91px;line-height:33.91px;font-weight:400;color:#d2414b;transform:scaleX(0.6800);">)</div>
<div class="t" style="left:1428.70px;top:424.00px;font-size:33.91px;line-height:33.91px;font-weight:400;color:#000;transform:scaleX(0.8980);">)+1</div>
<div class="t" style="left:715.71px;top:794.00px;font-size:36.52px;line-height:36.52px;font-weight:700;color:#000000;transform:scaleX(0.7947);">=</div>
<div class="t" style="left:735.60px;top:794.00px;font-size:36.52px;line-height:36.52px;font-weight:700;color:#000000;transform:scaleX(1.0476);">LEN(TRIM(A1))</div>
<div class="t" style="left:1005.52px;top:794.00px;font-size:36.52px;line-height:36.52px;font-weight:700;color:#000000;transform:scaleX(1.2800);">-</div>
<div class="t" style="left:1022.49px;top:794.00px;font-size:36.52px;line-height:36.52px;font-weight:700;color:#000000;transform:scaleX(1.0066);">LEN(SUBSTITUTE(A1,</div>
<div class="t" style="left:1407.93px;top:794.00px;font-size:36.52px;line-height:36.52px;font-weight:700;color:#000000;transform:scaleX(0.9346);">"&nbsp;",""))+1</div>
<div class="t" style="left:875.63px;top:881.00px;font-size:36.52px;line-height:36.52px;font-weight:700;color:#000000;transform:scaleX(0.9865);">Press</div>
<div class="t" style="left:980.92px;top:881.00px;font-size:36.52px;line-height:36.52px;font-weight:700;color:#000000;transform:scaleX(1.0396);">Enter</div>
<div class="t" style="left:1086.60px;top:881.00px;font-size:36.52px;line-height:36.52px;font-weight:700;color:#000000;transform:scaleX(0.9976);">on</div>
<div class="t" style="left:1139.20px;top:881.00px;font-size:36.52px;line-height:36.52px;font-weight:700;color:#000000;transform:scaleX(0.9949);">your</div>
<div class="t" style="left:1226.44px;top:881.00px;font-size:36.52px;line-height:36.52px;font-weight:700;color:#000000;transform:scaleX(1.0291);">keyboard</div>
<div class="t" style="left:132.20px;top:957.00px;font-size:19.71px;line-height:19.71px;font-weight:700;color:#217346;transform:scaleX(0.9813);">Sheet1</div>
<div class="t" style="left:12.66px;top:995.00px;font-size:15.94px;line-height:15.94px;font-weight:400;color:#484644;transform:scaleX(0.9407);">Edit</div>
<div class="t" style="left:157.60px;top:995.00px;font-size:15.94px;line-height:15.94px;font-weight:400;color:#484644;transform:scaleX(0.9616);">Accessibility: Investigate</div>
<div class="t" style="left:1699.00px;top:995.00px;font-size:15.94px;line-height:15.94px;font-weight:400;color:#b8b5b2;transform:scaleX(1.0150);">310%</div>
</body></html>
